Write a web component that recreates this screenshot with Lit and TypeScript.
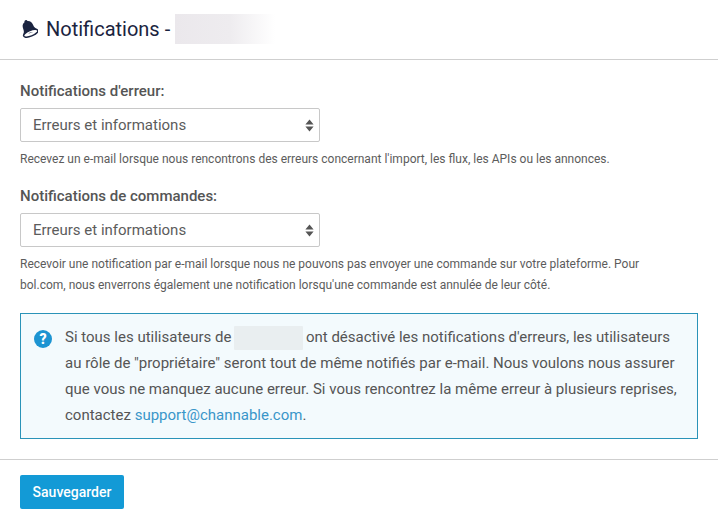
import { LitElement, html, css } from "lit";
import { customElement } from "lit/decorators.js";

@customElement("app-root")
export class AppRoot extends LitElement {
  static styles = css`
    :host { display: block; width: 718px; height: 524px; background: #fff; font-family: Roboto, "Liberation Sans", sans-serif; color: #555; overflow: hidden; }
    header { height: 59px; box-sizing: border-box; display: flex; align-items: center; padding: 0 20px 1px 20px; color: #1b2440; font-size: 20px; }
    header svg { width: 18px; height: 18px; margin-right: 8px; flex: none; }
    .redact-title { width: 100px; height: 30px; margin-left: 5px; background: linear-gradient(90deg, #ebe8ec 0%, #eeecef 55%, #fff 100%); }
    hr { margin: 0; border: 0; height: 1px; background: #cfcfcf; }
    main { padding: 21px 20px 0; height: 399px; box-sizing: border-box; }
    label { display: block; font-size: 15px; font-weight: 500; line-height: 20px; color: #555; margin-bottom: 7px; }
    .select { width: 300px; height: 34px; box-sizing: border-box; border: 1px solid #c8c8c8; border-radius: 2px; display: flex; align-items: center; justify-content: space-between; padding: 0 5px 0 12px; font-size: 15px; color: #5c5c5c; }
    .select svg { width: 9px; height: 13px; }
    .help { font-size: 12px; line-height: 21px; color: #5c5c5c; margin: 7px 0 0; max-width: 640px; }
    .second { margin-top: 16px; }
    .info { margin-top: 17px; height: 126px; box-sizing: border-box; border: 1px solid #2a93b8; background: #f3fafd; padding: 10px 12px 0 13px; display: flex; gap: 13px; font-size: 15px; line-height: 26px; color: #555; }
    .info svg { width: 18px; height: 18px; flex: none; margin-top: 6px; }
    .info p { margin: 0; }
    .redact-inline { display: inline-block; width: 69px; height: 24px; margin: 0 -1px; vertical-align: middle; background: #e9eef0; border-radius: 1px; }
    a { color: #3a96c9; text-decoration: none; }
    footer { padding: 15px 20px; }
    button { width: 104px; height: 34px; border: 0; border-radius: 2px; background: #139ad6; color: #fff; font: 500 14px Roboto, "Liberation Sans", sans-serif; padding: 0; }
  `;

  private arrows() {
    return html`<svg viewBox="0 0 9 13"><path d="M4.5 .5 L8.6 5.5 H.4 Z M4.5 12.5 L8.6 7.5 H.4 Z" fill="#555"/></svg>`;
  }

  render() {
    return html`
      <header>
        <svg viewBox="0 0 18 18">
          <g transform="rotate(-22 9 9)">
            <path d="M9 -.5 c1 0 1.6 .7 1.6 1.5 c2.6 .8 3.7 3 3.7 5.6 c0 2.8 .9 4.2 2.2 5.6 H1.5 c1.3 -1.4 2.2 -2.8 2.2 -5.6 c0 -2.6 1.1 -4.8 3.7 -5.6 c0 -.8 .6 -1.5 1.6 -1.5 z" fill="#1b2440"/>
            <ellipse cx="9" cy="13.6" rx="7.6" ry="2.8" fill="#fff" stroke="#1b2440" stroke-width="1.4"/>
            <path d="M6.5 13.2 c1.5 -.8 3.5 -.8 5 0 z" fill="#1b2440"/>
          </g>
        </svg>
        <span>Notifications -</span><div class="redact-title"></div>
      </header>
      <hr />
      <main>
        <label>Notifications d'erreur:</label>
        <div class="select"><span>Erreurs et informations</span>${this.arrows()}</div>
        <p class="help">Recevez un e-mail lorsque nous rencontrons des erreurs concernant l'import, les flux, les APIs ou les annonces.</p>
        <label class="second">Notifications de commandes:</label>
        <div class="select"><span>Erreurs et informations</span>${this.arrows()}</div>
        <p class="help">Recevoir une notification par e-mail lorsque nous ne pouvons pas envoyer une commande sur votre plateforme. Pour bol.com, nous enverrons également une notification lorsqu'une commande est annulée de leur côté.</p>
        <div class="info">
          <svg viewBox="0 0 18 18"><circle cx="9" cy="9" r="9" fill="#1c94d2"/><text x="9" y="14" text-anchor="middle" font-family="Roboto, sans-serif" font-weight="900" font-size="14" fill="#fff">?</text></svg>
          <p>Si tous les utilisateurs de <span class="redact-inline"></span> ont désactivé les notifications d'erreurs, les utilisateurs au rôle de "propriétaire" seront tout de même notifiés par e-mail. Nous voulons nous assurer que vous ne manquez aucune erreur. Si vous rencontrez la même erreur à plusieurs reprises, contactez <a href="#">support@channable.com</a>.</p>
        </div>
      </main>
      <hr />
      <footer><button>Sauvegarder</button></footer>
    `;
  }
}
